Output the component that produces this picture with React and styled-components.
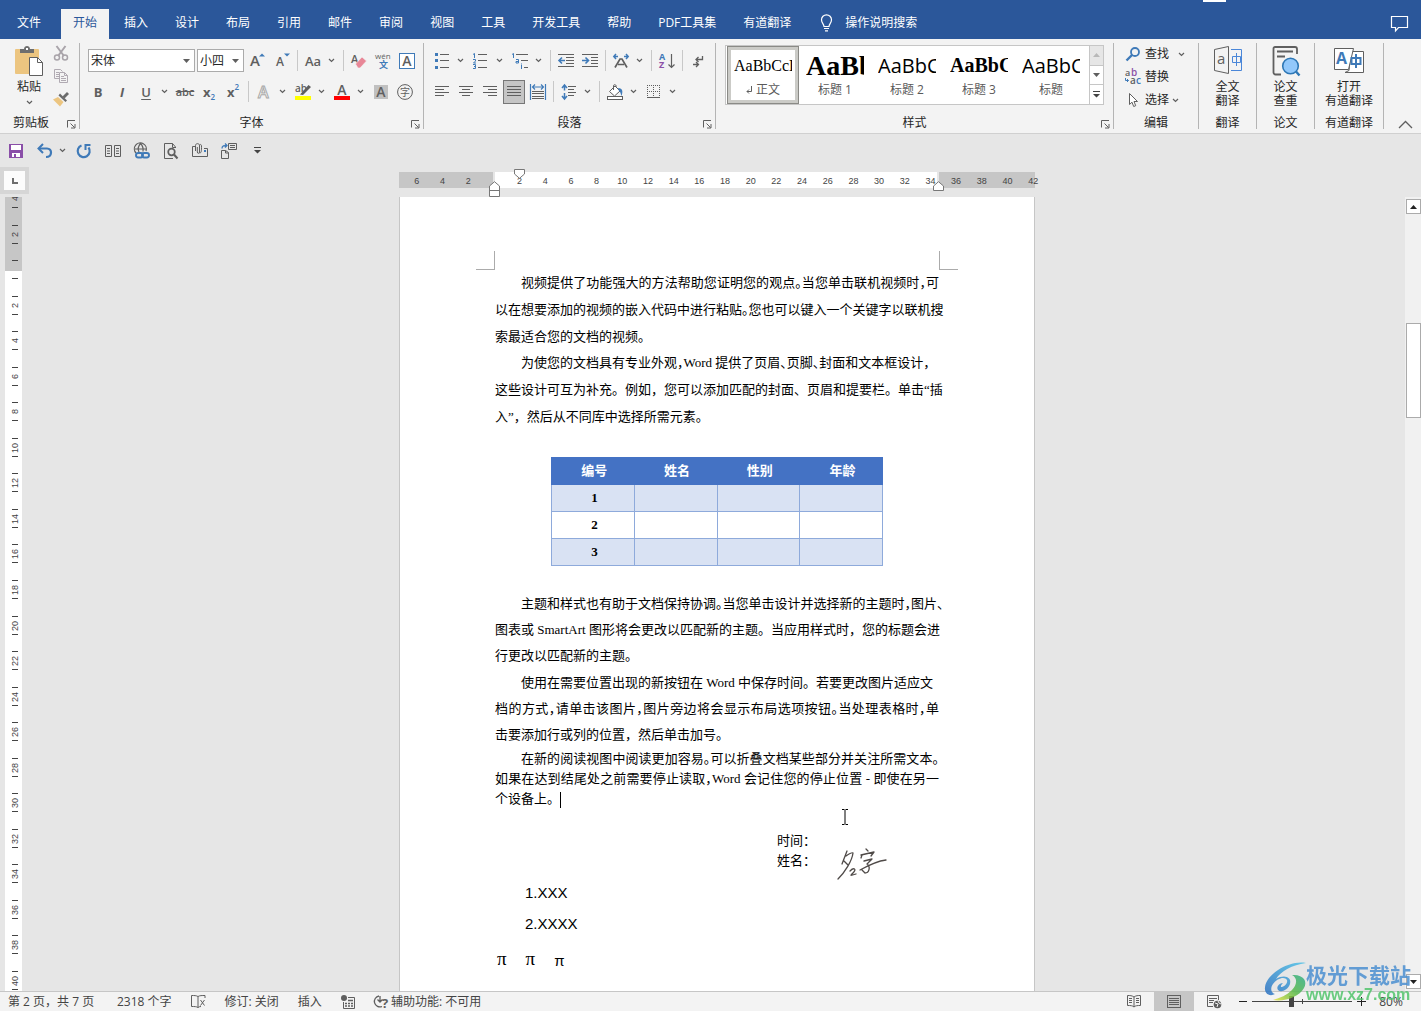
import React from "react";
import styled, { createGlobalStyle, css } from "styled-components";

const INK = "#5f5f5f";
const BLUE = "#3f7ab8";
const UI = '"Open Sans", "Noto Sans CJK SC", sans-serif';

const Global = createGlobalStyle`
  *, *::before, *::after { box-sizing: border-box; }
  body { margin: 0; background: #e6e6e6; font: 12px/16px ${UI}; color: #262626; }
  button, select, input { font: inherit; color: inherit; margin: 0; }
  button { border: 0; padding: 0; background: none; }
  svg { display: block; flex: none; overflow: visible; }
`;

/* ---------- shell ---------- */
const Shell = styled.div`
  height: 100vh;
  display: flex;
  flex-direction: column;
  overflow: hidden;
`;

const TabBar = styled.nav`
  position: relative;
  height: 39px;
  flex: none;
  display: flex;
  align-items: flex-end;
  gap: 3px;
  padding: 0 13px 0 5px;
  background: #2b579a;
`;
const Tab = styled.button`
  height: 30px;
  padding: 0 12px 2px;
  white-space: nowrap;
  color: ${(p) => (p.$active ? "#2b579a" : "#fff")};
  background: ${(p) => (p.$active ? "#f3f3f3" : "transparent")};
  &:first-child { margin-right: 5px; }
`;
const TellMe = styled.button`
  height: 30px;
  display: flex;
  align-items: center;
  gap: 12px;
  padding: 0 12px 2px 14px;
  color: #fff;
`;
const CommentButton = styled.button`
  height: 30px;
  margin-left: auto;
`;
const WindowNub = styled.span`
  position: absolute;
  top: 0;
  right: 195px;
  width: 23px;
  height: 2px;
  background: #fff;
`;

/* ---------- ribbon ---------- */
const Ribbon = styled.div`
  flex: none;
  display: flex;
  height: 95px;
  padding: 4px 0;
  background: #f3f3f3;
  border-bottom: 1px solid #d0d0d0;
`;
const Group = styled.section`
  width: ${(p) => p.$w}px;
  flex: none;
  display: flex;
  flex-direction: column;
  border-right: 1px solid #b4b4b4;
`;
const GroupBody = styled.div`
  flex: 1;
  min-height: 0;
  display: flex;
  flex-direction: ${(p) => (p.$row ? "row" : "column")};
  padding-left: ${(p) => p.$pad || 0}px;
`;
const GroupFoot = styled.div`
  height: 16px;
  display: flex;
  align-items: center;
  justify-content: center;
  position: relative;
  padding-top: 3px;
`;
const Launcher = styled.button`
  position: absolute;
  right: 3px;
  bottom: 0;
`;
const ClipLabel = styled.span`
  padding-right: 17px;
`;
const ToolRow = styled.div`
  height: 31px;
  display: flex;
  align-items: center;
  margin-top: ${(p) => p.$top || 0}px;
`;
const Tool = styled.button`
  width: ${(p) => p.$w || 24}px;
  height: 24px;
  flex: none;
  display: flex;
  align-items: center;
  justify-content: center;
  color: ${INK};
`;
const JustifyButton = styled(Tool)`
  width: 22px;
  margin: 0 1px;
  background: #c5c5c5;
  border: 1px solid #777;
`;
const CaretButton = styled.button`
  width: ${(p) => p.$w || 15}px;
  height: 24px;
  flex: none;
  display: flex;
  align-items: center;
  padding-left: ${(p) => (p.$w ? 0 : 3)}px;
`;
const Divider = styled.span`
  width: 1px;
  height: 21px;
  flex: none;
  margin: 0 3px;
  background: #c8c8c8;
`;
const Glyph = styled.span`
  font: ${(p) => p.$style || "normal"} ${(p) => p.$weight || 700} ${(p) => p.$size || 13}px/16px "Open Sans", sans-serif;
  color: ${INK};
  text-decoration: ${(p) => p.$deco || "none"};
  text-underline-offset: 2px;
`;
const Script = styled.span`
  align-self: ${(p) => (p.$low ? "flex-end" : "flex-start")};
  font: 600 8px/14px "Open Sans", sans-serif;
  color: ${BLUE};
`;
const FontFields = styled.div`
  display: flex;
  padding-left: 2px;
`;
const ComboBox = styled.label`
  position: relative;
  width: ${(p) => p.$w}px;
  height: 23px;
  margin-right: 2px;
  flex: none;
  background: #fff;
  border: 1px solid #ababab;
  select {
    appearance: none;
    width: 100%;
    height: 21px;
    padding: 0 2px;
    border: 0;
    background: transparent;
  }
  svg { position: absolute; right: 4px; top: 9px; pointer-events: none; }
`;
const PasteButton = styled.button`
  width: 46px;
  height: 66px;
  display: flex;
  flex-direction: column;
  align-items: center;
  padding: 3px 0 0 4px;
  svg + span { margin-top: 2px; }
  span + svg { margin-top: 5px; }
`;
const IconStack = styled.div`
  display: flex;
  flex-direction: column;
  padding: 2px 0 0 3px;
  gap: 7px;
`;
const Plain = styled.button`
  display: flex;
`;
const BigButton = styled.button`
  width: 100%;
  height: 68px;
  display: flex;
  flex-direction: column;
  align-items: center;
  padding-top: 3px;
  line-height: 14px;
`;
const BigIcon = styled.span`
  height: 34px;
`;
const EditLine = styled.div`
  height: 23px;
  display: flex;
  align-items: center;
  padding-bottom: 1px;
`;
const EditButton = styled.button`
  display: flex;
  align-items: center;
  gap: 4px;
`;
const IconSlot = styled.span`
  width: 16px;
  display: flex;
  justify-content: center;
`;
const Gap = styled.span`
  width: 6px;
`;
const CollapseSlot = styled.div`
  flex: 1;
  display: flex;
  align-items: flex-end;
  justify-content: flex-end;
  padding-right: 8px;
`;

/* ---------- style gallery ---------- */
const Gallery = styled.div`
  display: flex;
  height: 60px;
  margin: 2px 0 0 9px;
  width: 379px;
  background: #fff;
  border: 1px solid #c6c6c6;
  padding-left: 1px;
`;
const StyleCard = styled.button`
  width: 72px;
  height: 58px;
  flex: none;
  display: flex;
  flex-direction: column;
  align-items: center;
  padding: 5px 0 0;
  color: #595959;
  ${(p) => p.$on && css`
    border: 1px solid #8a8a86;
    box-shadow: inset 0 0 0 3px #cbcbc7;
    padding-top: 4px;
  `}
`;
const Preview = styled.span`
  width: 58px;
  height: 28px;
  overflow: hidden;
  white-space: nowrap;
  text-align: left;
  color: #000;
  font: ${(p) => p.$font};
  line-height: 29px;
`;
const CardName = styled.span`
  display: flex;
  align-items: center;
  gap: 4px;
  margin-top: 3px;
`;
const GalleryScroll = styled.div`
  width: 14px;
  margin-left: auto;
  display: flex;
  flex-direction: column;
  button {
    flex: 1;
    display: flex;
    align-items: center;
    justify-content: center;
    border-left: 1px solid #c6c6c6;
  }
  button + button { border-top: 1px solid #c6c6c6; }
  button:first-child { background: #e6e6e6; }
`;

const QuickBar = styled.div`
  flex: none;
  display: flex;
  align-items: center;
  height: 33px;
  padding-left: 1px;
`;

/* ---------- workspace ---------- */
const Workspace = styled.main`
  flex: 1;
  min-height: 0;
  display: grid;
  grid-template: 30px minmax(0, 1fr) / 29px minmax(0, 1fr) 16px;
`;
const TabCorner = styled.button`
  width: 29px;
  height: 27px;
  display: flex;
  align-items: center;
  justify-content: center;
  background: #fcfcfc;
  border: 4px solid #d6d6d6;
`;
const RulerTrack = styled.div`
  position: relative;
  width: 636px;
  height: 16px;
  margin: 5px auto 0;
  background: linear-gradient(90deg, #c6c6c6 0 94px, #e6e6e6 94px 96px, #fff 96px 538px, #e6e6e6 538px 540px, #c6c6c6 540px);
`;
const RulerNumbers = styled.div`
  display: grid;
  grid-template-columns: repeat(25, 1fr);
  margin: 0 -11px 0 5px;
  font: 9px/18px "Liberation Sans", Arial, sans-serif;
  color: #444;
  text-align: center;
`;
const Marker = styled.svg`
  position: absolute;
  left: ${(p) => p.$x}px;
  top: ${(p) => p.$y}px;
`;
const SideRuler = styled.div`
  width: 17px;
  margin-left: 5px;
  overflow: hidden;
  background: linear-gradient(#c6c6c6 0 74px, #fff 74px);
`;
const SideNumbers = styled.div`
  display: grid;
  grid-template-rows: repeat(23, 1fr);
  height: 817px;
  margin-top: -16px;
`;
const SideCell = styled.div`
  display: flex;
  flex-direction: column;
  align-items: center;
  justify-content: center;
  padding-left: 2px;
  font: 9px/10px "Liberation Sans", Arial, sans-serif;
  color: #444;
  &::before, &::after { content: ""; width: 6px; height: 1px; background: #444; }
  span {
    height: 17px;
    display: flex;
    align-items: center;
    justify-content: center;
    writing-mode: vertical-rl;
    transform: rotate(180deg);
  }
`;
const Canvas = styled.div`
  overflow: hidden;
  min-height: 0;
`;
const ScrollBar = styled.div`
  grid-column: 3;
  display: flex;
  flex-direction: column;
  background: #f1f1f1;
  padding: 2px 0 2px 1px;
`;
const ScrollButton = styled.button`
  height: 15px;
  display: flex;
  align-items: center;
  justify-content: center;
  background: #fff;
  border: 1px solid #ababab;
`;
const ScrollTrack = styled.div`
  flex: 1;
  padding-top: 109px;
`;
const Thumb = styled.div`
  height: 95px;
  background: #fff;
  border: 1px solid #ababab;
`;

/* ---------- page ---------- */
const Page = styled.article`
  position: relative;
  width: 636px;
  min-height: 900px;
  margin: 0 auto;
  padding: 54px 95px 0;
  background: #fff;
  border: solid #c6c6c6;
  border-width: 0 1px;
  color: #000;
  font: 13px/27px "Liberation Serif", "Noto Sans CJK SC", serif;
`;
const CropMarks = styled.div`
  display: flex;
  justify-content: space-between;
  margin: 0 -19px -1px;
  &::before, &::after {
    content: "";
    width: 19px;
    height: 19px;
    border-bottom: 1px solid #ababab;
  }
  &::before { border-right: 1px solid #ababab; }
  &::after { border-left: 1px solid #ababab; }
`;
const Paragraph = styled.p`
  margin: 0 0 ${(p) => p.$after || 0}px;
  line-height: ${(p) => p.$pitch}px;
`;
const Line = styled.span`
  display: block;
  white-space: nowrap;
  padding-left: ${(p) => (p.$indent ? 26 : 0)}px;
  text-align: ${(p) => (p.$fill ? "justify" : "left")};
  text-align-last: ${(p) => (p.$fill ? "justify" : "left")};
  font-feature-settings: ${(p) => (p.$tight ? '"halt"' : "normal")};
`;
const TextCaret = styled.span`
  display: inline-block;
  width: 1px;
  height: 16px;
  vertical-align: middle;
  background: #000;
`;
const DataTable = styled.table`
  width: 332px;
  margin: 28px auto 25px;
  border-collapse: collapse;
  table-layout: fixed;
  font-weight: 700;
  text-align: center;
  line-height: 26px;
  th, td { height: 27px; padding: 0 0 0 3px; border: 1px solid #8eaadb; }
  thead th { background: #4472c4; color: #fff; border-color: #4472c4; }
  tbody tr:nth-child(odd) { background: #d9e2f3; }
`;
const SignBlock = styled.div`
  display: flex;
  gap: 21px;
  margin-top: 22px;
  padding-left: 282px;
  line-height: 20px;
  svg { margin: 16px 0 -10px; }
`;
const SignLabels = styled.div`
  display: flex;
  flex-direction: column;
`;
const Items = styled.ul`
  list-style: none;
  margin: 6px 0 0;
  padding: 0 0 0 30px;
  font: 15px/31px "Liberation Sans", Arial, sans-serif;
`;
const Pis = styled.p`
  display: flex;
  gap: 19px;
  margin: 5px 0 0;
  padding-left: 2px;
  font: 19px/30px "Liberation Serif", "Times New Roman", serif;
  span:last-child { font: 15px/34px "Liberation Sans", Arial, sans-serif; }
`;
const Pointer = styled.svg`
  position: absolute;
  left: 441px;
  top: 612px;
`;

/* ---------- status bar ---------- */
const StatusBar = styled.footer`
  flex: none;
  height: 20px;
  display: flex;
  align-items: center;
  justify-content: space-between;
  background: #f3f3f3;
  border-top: 1px solid #c6c6c6;
  color: #444;
`;
const StatusSide = styled.div`
  display: flex;
  align-items: center;
  gap: ${(p) => p.$gap || 0}px;
  padding: ${(p) => p.$pad};
`;
const StatusButton = styled.button`
  display: flex;
  align-items: center;
  gap: 1px;
  white-space: nowrap;
  &:first-child { min-width: 90px; }
`;
const ViewButton = styled.button`
  width: 40px;
  height: 19px;
  display: flex;
  align-items: center;
  justify-content: center;
  background: ${(p) => (p.$on ? "#c6c6c6" : "transparent")};
`;
const ZoomStep = styled.button`
  width: 18px;
  height: 19px;
  display: flex;
  align-items: center;
  justify-content: center;
`;
const ZoomRange = styled.input`
  appearance: none;
  width: 100px;
  height: 12px;
  background: linear-gradient(#444, #444) 50px 50% / 1px 5px no-repeat, linear-gradient(#444, #444) 0 50% / 100% 1px no-repeat;
  &::-webkit-slider-thumb {
    appearance: none;
    width: 5px;
    height: 11px;
    background: #444;
  }
`;
const ZoomLevel = styled.button`
  margin-left: 6px;
  width: 30px;
`;

const Watermark = styled.div`
  position: fixed;
  right: 10px;
  bottom: 8px;
  display: flex;
  align-items: center;
  opacity: 0.85;
  pointer-events: none;
`;
const WatermarkText = styled.div`
  display: flex;
  flex-direction: column;
  strong { font: 700 21px/26px "Noto Sans CJK SC", sans-serif; color: #4a8fd0; }
  span { font: 700 16px/16px "Liberation Sans", Arial, sans-serif; color: #52c46c; }
`;

/* ---------- drawings ---------- */
const Svg = ({ w = 16, h = 16, children, ...rest }) => (
  <svg width={w} height={h} viewBox={`0 0 ${w} ${h}`} fill="none" stroke={INK} aria-hidden="true" {...rest}>
    {children}
  </svg>
);
const Down = () => (
  <Svg w={7} h={5}><path d="M1 1l2.500 2.500L6 1" strokeWidth="1.200" /></Svg>
);
const Solid = ({ color = INK, up }) => (
  <Svg w={7} h={4} stroke="none"><path fill={color} d={up ? "M0 4h7L3.500 0z" : "M0 0h7L3.500 4z"} /></Svg>
);
const Caret = ({ w }) => (
  <CaretButton aria-label="更多选项" $w={w}><Down /></CaretButton>
);
const LaunchIcon = () => (
  <Svg w={9} h={9}><path d="M.5 7.500V.5H8M3.500 3.500L7.500 7.500M8 4v4H4" /></Svg>
);
const Lines = ({ rows }) => (
  <path shapeRendering="crispEdges" d={rows.map(([x, y, w]) => `M${x} ${y}.5h${w}`).join("")} />
);
const T = ({ x, y, s, c = INK, b = 700, children, ...rest }) => (
  <text x={x} y={y} fontSize={s} fill={c} stroke="none" fontWeight={b} fontFamily={UI} {...rest}>
    {children}
  </text>
);

const I = {
  bulb: (
    <Svg w={13} h={18} stroke="#fff">
      <path d="M4 12.500C4 10 1.500 9 1.500 5.800a5 5 0 0 1 10 0C11.500 9 9 10 9 12.500zM4 14.500h5M5 16.800h3" strokeWidth="1.200" />
    </Svg>
  ),
  comment: <Svg w={17} h={16} stroke="#fff"><path d="M.5.5h16v11h-9L4.500 15v-3.500h-4z" strokeWidth="1.200" /></Svg>,
  paste: (
    <Svg w={28} h={31} stroke="none">
      <rect y="3" width="24" height="25" rx="1" fill="#ecc580" />
      <path d="M5 7V3h4c0-4 6-4 6 0h4v4z" fill="#6e6e6e" /><rect x="11" y="2" width="2" height="2" fill="#fff" />
      <path d="M14.500 11.500h8l5 5v13h-13z" fill="#fff" stroke={INK} /><path d="M22.500 11.500v5h5" stroke={INK} />
    </Svg>
  ),
  cut: (
    <Svg stroke="#a9a4aa">
      <path d="M3.500 1l7.500 10M12.500 1L5 11" strokeWidth="2" /><circle cx="4" cy="12.500" r="2.500" strokeWidth="1.500" /><circle cx="12" cy="12.500" r="2.500" strokeWidth="1.500" />
    </Svg>
  ),
  copy: (
    <Svg stroke="#b0aab2">
      <path d="M1.500 1.500h6l2 2M1.500 1.500v9H6M3 4.500h3M3 6.500h3M3 8.500h3" /><path fill="#f3f3f3" d="M6.500 4.500h5l3 3v7h-8z" /><path d="M11.500 4.500v3h3M8 8.500h3M8 10.500h5M8 12.500h5" />
    </Svg>
  ),
  brush: (
    <Svg stroke="none">
      <path fill="#ecc580" d="M0 8.500l5-2.500 5.500 5L7 15.500z" /><path fill="#6b6b6b" d="M5.500 4.500l7 6.500 1.500-1.500-7-7z" /><path fill="#6b6b6b" d="M9.500 5.500L14 1l2 2-4.500 4.500z" />
    </Svg>
  ),
  grow: <Svg><T x="0" y="13" s="15" b={600}>A</T><path fill={BLUE} stroke="none" d="M9 3.500h6L12 .5z" /></Svg>,
  shrink: <Svg><T x="2" y="13" s="12" b={600}>A</T><path fill={BLUE} stroke="none" d="M10 .5h6l-3 3z" /></Svg>,
  eraser: (
    <Svg><T x="0" y="10" s="11" b={600}>A</T><path fill="#e88797" stroke="#f3f3f3" strokeWidth=".6" d="M4.500 11L11 4l4.500 4L9 15H7z" /></Svg>
  ),
  pinyin: (
    <Svg><T x="0" y="6" s="8" b={400}>wén</T><T x="4" y="15" s="9" c={BLUE}>文</T></Svg>
  ),
  boxA: <Svg><rect x=".5" y=".5" width="15" height="15" fill="#fff" stroke={BLUE} /><T x="8" y="13" s="14" b={600} textAnchor="middle">A</T></Svg>,
  effects: <Svg><text x="2" y="14" fontSize="16" fontWeight="600" fill="#fff" stroke="#a8a8a8" fontFamily={UI}>A</text></Svg>,
  highlight: (
    <Svg><T x="0" y="8" s="10" b={600}>ab</T><path fill={INK} stroke="none" d="M5 10.500L13.500 1 16 3 8 11z" /><rect y="12" width="16" height="4" fill="#ff0" stroke="none" /></Svg>
  ),
  fontColor: <Svg><T x="8" y="11" s="14" b={600} textAnchor="middle">A</T><rect y="12" width="16" height="4" fill="#f00" stroke="none" /></Svg>,
  shadeA: <Svg><rect x="1" y="1" width="14" height="14" fill="#c0c0c0" stroke="none" /><T x="8" y="13" s="14" b={600} textAnchor="middle">A</T></Svg>,
  circleChar: <Svg><circle cx="8" cy="8" r="7.400" /><T x="8" y="12" s="10" b={400} textAnchor="middle">字</T></Svg>,
  bullets: <Svg><g fill={BLUE} stroke="none"><rect x="1" width="3" height="3" /><rect x="1" y="6" width="3" height="3" /><rect x="1" y="13" width="3" height="3" /></g><Lines rows={[[6, 1, 9], [6, 7, 9], [6, 14, 9]]} /></Svg>,
  numbers: <Svg stroke={BLUE}><path d="M1.500 5V.5L0 1.500M0 6.500h2.500v1.500L.5 10H3M0 11.500h2.500v4H0M1 13.500h1.500" /><g stroke={INK}><Lines rows={[[5, 1, 9], [5, 7, 9], [5, 14, 9]]} /></g></Svg>,
  levels: <Svg stroke={BLUE}><path d="M1.500 5V.5L0 1.500M4 6.500h2.500V10H4V8.500h2.500M9.500 12v4M9.500 10.500v1" /><g stroke={INK}><Lines rows={[[4, 1, 12], [9, 7, 7], [12, 14, 4]]} /></g></Svg>,
  outdent: <Svg><Lines rows={[[0, 1, 16], [8, 4, 8], [8, 7, 8], [8, 10, 8], [0, 13, 16]]} /><path stroke={BLUE} strokeWidth="1.600" d="M7 7.500H1.500M4 4.500l-3 3 3 3" /></Svg>,
  indent: <Svg><Lines rows={[[0, 1, 16], [9, 4, 7], [9, 7, 7], [9, 10, 7], [0, 13, 16]]} /><path stroke={BLUE} strokeWidth="1.600" d="M0 7.500h6M3.500 4.500l3 3-3 3" /></Svg>,
  asian: <Svg><path d="M2 14.500L7 6h2l5 8.500M5 11.500h6" strokeWidth="1.700" /><path stroke={BLUE} strokeWidth="1.500" d="M5 3.500H1M3 1L.8 3.500 3 6M11 3.500h4M13 1l2.200 2.500L13 6" /></Svg>,
  sort: <Svg><T x="0" y="7" s="9" c={BLUE}>A</T><T x="0" y="15" s="9" c="#8d52a8">Z</T><path d="M12.500 1v13M9.500 11.500l3 3 3-3" strokeWidth="1.200" /></Svg>,
  marks: <Svg w={12}><path d="M10.500 3v3.500H4M6.500 4L4 6.500 6.500 9M1 11.500h5M4 9l2.500 2.500L4 14" strokeWidth="1.300" /></Svg>,
  left: <Svg><Lines rows={[[1, 2, 14], [1, 5, 9], [1, 8, 14], [1, 11, 9]]} /></Svg>,
  center: <Svg><Lines rows={[[1, 2, 14], [4, 5, 8], [1, 8, 14], [4, 11, 8]]} /></Svg>,
  right: <Svg><Lines rows={[[1, 2, 14], [6, 5, 9], [1, 8, 14], [6, 11, 9]]} /></Svg>,
  justify: <Svg w={14}><Lines rows={[[0, 2, 14], [0, 5, 14], [0, 8, 14], [0, 11, 14]]} /></Svg>,
  distribute: <Svg><path stroke={BLUE} d="M.5 0v16M15.500 0v16M3 3h10M5 .5L2.500 3 5 5.500M11 .5L13.500 3 11 5.500" strokeWidth="1.200" /><Lines rows={[[2, 7, 12], [2, 9, 12], [2, 12, 12], [2, 14, 12]]} /></Svg>,
  spacing: <Svg><path stroke={BLUE} strokeWidth="1.500" d="M3.500 1v5.500M3.500 9v6M1 4l2.500-3L6 4M1 12l2.500 3L6 12" /><Lines rows={[[7, 2, 8], [7, 5, 6], [7, 8, 8], [7, 11, 6]]} /></Svg>,
  bucket: <Svg><path fill="#fff" d="M2.500 7.500L8 2l5 5-5.500 5z" /><path d="M6.500 6V1.500C6.500.5 9 .5 9 1.500V3" /><path fill={BLUE} stroke="none" d="M11 4c5 0 5 4 3.500 8-1-2-.5-4-2.500-5z" /><rect x=".5" y="12.500" width="15" height="3" fill="#fff" /></Svg>,
  borders: <Svg><path strokeDasharray="1 1" shapeRendering="crispEdges" d="M1 1.500h13M1 7.500h13M1.500 1v12M7.500 1v12M13.500 1v12" /><Lines rows={[[1, 13, 13]]} /></Svg>,
  find: <Svg w={14} h={14} stroke={BLUE}><circle cx="9" cy="5" r="4" strokeWidth="1.800" /><path d="M6 8l-5.500 5.500" strokeWidth="2.400" /></Svg>,
  replace: <Svg><T x="0" y="7" s="9" b={600}>a</T><T x="6" y="7" s="10" c="#8d52a8" b={600}>b</T><T x="5" y="15" s="10" b={600}>a</T><T x="11" y="15" s="10" c={BLUE} b={600}>c</T><path stroke={BLUE} d="M.5 9v2.500h3M2 10l1.500 1.500L2 13" /></Svg>,
  select: <Svg w={14}><path fill="#fff" d="M3.500 1.500v11l2.500-2.300 1.700 4.300 2-.8L8 9.500h3.500z" /></Svg>,
  translate: (
    <Svg w={28} h={28}><path d="M.5 3.500l14-3v27l-14-3z" /><T x="3" y="18" s="15" b={400}>a</T><g stroke="#4a86d8"><path d="M17 3.500h10.500v21H17M18.500 10.500h8v6h-8zM22.500 7v13" /></g></Svg>
  ),
  paper: (
    <Svg w={28} h={30}><path d="M9 28.500H3.500a2 2 0 0 1-2-2v-24a1.500 1.500 0 0 1 1.500-1.500h20a2 2 0 0 1 2 2v5" strokeWidth="1.800" /><path d="M5 5.500h16M5 10.500h8" strokeWidth="1.800" /><circle cx="18.500" cy="20" r="7.800" fill="#92c8fb" stroke="#2e77b5" strokeWidth="1.600" /><path d="M24 25.500l3.500 4" stroke="#2e77b5" strokeWidth="2.400" /></Svg>
  ),
  youdao: (
    <Svg w={30} h={28}><path fill="#fff" d="M15 24.500l-4 2h18.500v-21H17z" /><path fill="#fff" d="M.5 2.500h19l-5 21H.5z" /><T x="2" y="18" s="16" c={BLUE}>A</T><path stroke={BLUE} strokeWidth="2" d="M17.500 12h9v6h-9zM22 8v14" /></Svg>
  ),
  up: <Svg w={15} h={9}><path d="M1 8l6.500-6.500L14 8" strokeWidth="1.300" /></Svg>,
  save: <Svg><path fill="#8a4fa8" stroke="none" d="M1 1h14v14H1z" /><path fill="#fff" stroke="none" d="M3 2h10v5H3zM4 10h8v4H4z" /><path fill="#8a4fa8" stroke="none" d="M6 11h2v3H6z" /></Svg>,
  undo: <Svg stroke={BLUE}><path d="M2 5.500h8c5.500 0 5.500 8.500-1 8.500" strokeWidth="2.200" /><path d="M6 1L1.500 5.500 6 10" strokeWidth="2" /></Svg>,
  redo: <Svg stroke={BLUE}><path d="M5.500 2.500A6 6 0 1 0 12.500 4.500" strokeWidth="2.200" /><path d="M14.500 2H9.500V7" strokeWidth="2" /></Svg>,
  columns: <Svg><path d="M.5 2.500h6v11h-6zM9.500 2.500h6v11h-6zM2 5.500h3M2 8h3M2 10.500h3M11 5.500h3M11 8h3M11 10.500h3" /></Svg>,
  globe: <Svg><path d="M2 10A6 6 0 1 1 12 8M1 6h11M6.500.5C3.500 4 4 7 5 9M6.500.5c3 3 3 5 2.500 8" strokeWidth="1.200" /><g stroke={BLUE} strokeWidth="1.900"><rect x="2" y="10" width="7" height="4.500" rx="2.200" /><rect x="8" y="10" width="7" height="4.500" rx="2.200" /></g></Svg>,
  docSearch: <Svg><path d="M12.500 5v-1L9.500.5h-8v15H10M9.500.5v4h3" /><circle cx="8.500" cy="9" r="3.300" strokeWidth="1.700" /><path d="M11 11.500l3.500 4" strokeWidth="2" /></Svg>,
  mail: <Svg><path d="M3 3.500H.5v10h15v-8H12" /><path d="M3.500 8V2.500c0-2.500 4-2.500 4 0V9c0 1.800-2.200 1.800-2.200 0V4M7.500 10c2 0 2-2 2-7 0-2-2-2-2 0" /><path stroke={BLUE} strokeWidth="2" d="M12 8h2" /></Svg>,
  insertDoc: <Svg><path d="M7.500.5h8v6h-8zM9 2.500h5M9 4.500h5M.5 7.500h4l3 2v6h-7zM4.500 7.500v2.500h3" /><path stroke={BLUE} strokeWidth="1.300" d="M1 5.500c0-3 2-3 5-3M4 .5l2 2-2 2" /></Svg>,
  more: <Svg w={7} h={7} stroke="none"><path fill="#444" d="M0 0h7v1H0zM0 3h7L3.500 6.500z" /></Svg>,
  ell: <Svg w={6} h={6} stroke="#6e6e6e"><path d="M1 0v5h5" strokeWidth="2" /></Svg>,
  proof: <Svg w={15} h={13}><path d="M7 12.500V1.500C5.500.5 3 .5.500.5v11c3 0 5 0 6.500 1 1-.8 2-1 3-1M7 1.500c1.500-1 4-1 7-1V3M9.500 5l4 5.500M13.500 5l-4 5.500" /></Svg>,
  macro: <Svg w={14} h={14}><path d="M7 2.500h6.500v11h-11V7" /><circle cx="3" cy="3" r="3" fill={INK} stroke="none" /><path d="M7 5.500h5M4 8.500h2m1 0h2m1 0h2M4 11h2m1 0h2m1 0h2" strokeWidth="1.500" /></Svg>,
  access: <Svg w={16} h={14}><path d="M5 1a5.500 5.500 0 1 0 3 10.500M6 1v6M3.500 4.500L6 7l2.500-2.500" strokeWidth="1.300" /><T x="8" y="13" s="13">?</T></Svg>,
  read: <Svg w={14} h={13}><path d="M7 12V2C5 .5 3 .5.500.5v10c3 0 5 0 6.500 1.500 1.500-1.500 3.500-1.500 6.500-1.500V.5C11 .5 9 .5 7 2M2 3.500h3M2 5.500h3M2 7.500h3M9 3.500h3M9 5.500h3M9 7.500h3" /></Svg>,
  print: <Svg w={14} h={13}><path shapeRendering="crispEdges" d="M.5.5h13v12H.5zM2 3.500h10M2 5.500h10M2 7.500h10M2 9.500h10" /></Svg>,
  web: <Svg w={15} h={14}><path d="M6 11.500H.5V.5h11V5M2 3.500h8M2 5.500h5M2 7.500h4" /><circle cx="10.500" cy="9.500" r="3.800" fill={INK} stroke="none" /><path stroke="#f3f3f3" d="M8 8l3 1-1 3M11 6l1 2 2 1" /></Svg>,
};

/* ---------- data ---------- */
const tabs = ["文件", "开始", "插入", "设计", "布局", "引用", "邮件", "审阅", "视图", "工具", "开发工具", "帮助", "PDF工具集", "有道翻译"];
const SERIF = '"Liberation Serif", "Times New Roman", serif';
const styleCards = [
  { name: "正文", sample: "AaBbCcD", font: `400 16px ${SERIF}`, on: true },
  { name: "标题 1", sample: "AaBb", font: `700 28px ${SERIF}` },
  { name: "标题 2", sample: "AaBbC", font: `400 20px ${UI}` },
  { name: "标题 3", sample: "AaBbC", font: `700 20px ${SERIF}` },
  { name: "标题", sample: "AaBbC", font: `400 20px ${UI}` },
];
const intro = [
  [
    ["视频提供了功能强大的方法帮助您证明您的观点。当您单击联机视频时，可", "itf"],
    ["以在想要添加的视频的嵌入代码中进行粘贴。您也可以键入一个关键字以联机搜", "tf"],
    ["索最适合您的文档的视频。", ""],
  ],
  [
    ["为使您的文档具有专业外观，Word 提供了页眉、页脚、封面和文本框设计，", "it"],
    ["这些设计可互为补充。例如，您可以添加匹配的封面、页眉和提要栏。单击“插", "f"],
    ["入”，然后从不同库中选择所需元素。", ""],
  ],
];
const middle = [
  [
    ["主题和样式也有助于文档保持协调。当您单击设计并选择新的主题时，图片、", "it"],
    ["图表或 SmartArt 图形将会更改以匹配新的主题。当应用样式时，您的标题会进", "f"],
    ["行更改以匹配新的主题。", ""],
  ],
  [
    ["使用在需要位置出现的新按钮在 Word 中保存时间。若要更改图片适应文", "i"],
    ["档的方式，请单击该图片，图片旁边将会显示布局选项按钮。当处理表格时，单", "tf"],
    ["击要添加行或列的位置，然后单击加号。", ""],
  ],
];
const closing = [
  ["在新的阅读视图中阅读更加容易。可以折叠文档某些部分并关注所需文本。", "itf"],
  ["如果在达到结尾处之前需要停止读取，Word 会记住您的停止位置 - 即使在另一", "tf"],
  ["个设备上。", "", true],
];
const rulerMarks = [6, 4, 2, "", ...Array.from({ length: 21 }, (_, i) => (i + 1) * 2)];
const sideMarks = [4, 2, "", ...Array.from({ length: 20 }, (_, i) => (i + 1) * 2)];

const Block = ({ lines, pitch, after }) => (
  <Paragraph $pitch={pitch} $after={after}>
    {lines.map(([text, flags, cursor]) => (
      <Line key={text} $indent={flags.includes("i")} $tight={flags.includes("t")} $fill={flags.includes("f")}>
        {text}
        {cursor && <TextCaret />}
      </Line>
    ))}
  </Paragraph>
);

const Foot = ({ label, launch }) => (
  <GroupFoot>
    {label}
    {launch && <Launcher aria-label={`${label}设置`}><LaunchIcon /></Launcher>}
  </GroupFoot>
);

const B = ({ icon, label, ...rest }) => <Tool aria-label={label} {...rest}>{I[icon]}</Tool>;

const BigGroup = ({ w, icon, lines, label }) => (
  <Group $w={w}>
    <GroupBody>
      <BigButton>
        <BigIcon>{I[icon]}</BigIcon>
        {lines.map((l) => <span key={l}>{l}</span>)}
      </BigButton>
    </GroupBody>
    <Foot label={label} />
  </Group>
);

function RibbonBar() {
  return (
    <Ribbon>
      <Group $w={80}>
        <GroupBody $row $pad={4}>
          <PasteButton>{I.paste}<span>粘贴</span><Down /></PasteButton>
          <IconStack>
            <Plain aria-label="剪切">{I.cut}</Plain>
            <Plain aria-label="复制">{I.copy}</Plain>
            <Plain aria-label="格式刷">{I.brush}</Plain>
          </IconStack>
        </GroupBody>
        <GroupFoot>
          <ClipLabel>剪贴板</ClipLabel>
          <Launcher aria-label="剪贴板设置"><LaunchIcon /></Launcher>
        </GroupFoot>
      </Group>

      <Group $w={344}>
        <GroupBody $pad={6}>
          <ToolRow $top={2}>
            <FontFields>
              <ComboBox $w={107}><select aria-label="字体"><option>宋体</option></select><Solid /></ComboBox>
              <ComboBox $w={47}><select aria-label="字号"><option>小四</option></select><Solid /></ComboBox>
            </FontFields>
            <B icon="grow" label="增大字号" /><B icon="shrink" label="减小字号" /><Divider />
            <Tool><Glyph $weight={600}>Aa</Glyph></Tool><Caret /><Divider />
            <B icon="eraser" label="清除格式" /><B icon="pinyin" label="拼音指南" /><B icon="boxA" label="字符边框" />
          </ToolRow>
          <ToolRow>
            <Tool><Glyph>B</Glyph></Tool><Tool><Glyph $style="italic">I</Glyph></Tool>
            <Tool><Glyph $deco="underline" $weight={600}>U</Glyph></Tool><Caret />
            <Tool><Glyph $deco="line-through" $size={11} $weight={600}>abc</Glyph></Tool>
            <Tool><Glyph>x</Glyph><Script $low>2</Script></Tool>
            <Tool><Glyph>x</Glyph><Script>2</Script></Tool><Divider />
            <B icon="effects" label="文本效果" /><Caret /><B icon="highlight" label="突出显示" /><Caret />
            <B icon="fontColor" label="字体颜色" /><Caret /><B icon="shadeA" label="字符底纹" /><B icon="circleChar" label="带圈字符" />
          </ToolRow>
        </GroupBody>
        <Foot label="字体" launch />
      </Group>

      <Group $w={292}>
        <GroupBody $pad={6}>
          <ToolRow $top={2}>
            <B icon="bullets" label="项目符号" /><Caret /><B icon="numbers" label="编号" /><Caret /><B icon="levels" label="多级列表" /><Caret /><Divider />
            <B icon="outdent" label="减少缩进" /><B icon="indent" label="增加缩进" /><Divider />
            <B icon="asian" label="中文版式" /><Caret /><Divider /><B icon="sort" label="排序" /><Divider /><B icon="marks" label="显示标记" />
          </ToolRow>
          <ToolRow>
            <B icon="left" label="左对齐" /><B icon="center" label="居中" /><B icon="right" label="右对齐" />
            <JustifyButton aria-label="两端对齐">{I.justify}</JustifyButton><B icon="distribute" label="分散对齐" /><Divider />
            <B icon="spacing" label="行距" /><Caret /><Divider /><B icon="bucket" label="底纹" /><Caret /><B icon="borders" label="边框" /><Caret />
          </ToolRow>
        </GroupBody>
        <Foot label="段落" launch />
      </Group>

      <Group $w={398}>
        <GroupBody>
          <Gallery>
            {styleCards.map((s) => (
              <StyleCard key={s.name} $on={s.on}>
                <Preview $font={s.font}>{s.sample}</Preview>
                <CardName>
                  {s.on && <Svg w={6} h={8}><path d="M5.500 0v5.500H1M3 3.500l-2 2 2 2" /></Svg>}
                  {s.name}
                </CardName>
              </StyleCard>
            ))}
            <GalleryScroll>
              <button aria-label="上一行"><Solid up color="#b8b8b8" /></button>
              <button aria-label="下一行"><Solid /></button>
              <button aria-label="更多样式">{I.more}</button>
            </GalleryScroll>
          </Gallery>
        </GroupBody>
        <Foot label="样式" launch />
      </Group>

      <Group $w={85}>
        <GroupBody $pad={11}>
          <EditLine><EditButton><IconSlot>{I.find}</IconSlot>查找</EditButton><Gap /><Caret /></EditLine>
          <EditLine><EditButton><IconSlot>{I.replace}</IconSlot>替换</EditButton></EditLine>
          <EditLine><EditButton><IconSlot>{I.select}</IconSlot>选择</EditButton><Caret /></EditLine>
        </GroupBody>
        <Foot label="编辑" />
      </Group>

      <BigGroup w={58} icon="translate" lines={["全文", "翻译"]} label="翻译" />
      <BigGroup w={58} icon="paper" lines={["论文", "查重"]} label="论文" />
      <BigGroup w={69} icon="youdao" lines={["打开", "有道翻译"]} label="有道翻译" />
      <CollapseSlot><Plain aria-label="折叠功能区">{I.up}</Plain></CollapseSlot>
    </Ribbon>
  );
}

export default function App() {
  return (
    <Shell lang="zh-CN">
      <Global />
      <TabBar>
        {tabs.map((t) => <Tab key={t} $active={t === "开始"}>{t}</Tab>)}
        <TellMe>{I.bulb}操作说明搜索</TellMe>
        <CommentButton aria-label="批注">{I.comment}</CommentButton>
        <WindowNub />
      </TabBar>
      <RibbonBar />
      <QuickBar>
        <B icon="save" label="保存" $w={29} /><B icon="undo" label="撤消" $w={29} /><Caret w={10} />
        <B icon="redo" label="重复" $w={29} /><B icon="columns" label="并排查看" $w={29} /><B icon="globe" label="超链接" $w={29} />
        <B icon="docSearch" label="打印预览" $w={29} /><B icon="mail" label="电子邮件" $w={29} />
        <B icon="insertDoc" label="插入文件" $w={29} /><B icon="more" label="自定义" $w={29} />
      </QuickBar>

      <Workspace>
        <TabCorner aria-label="制表符">{I.ell}</TabCorner>
        <div>
          <RulerTrack>
            <RulerNumbers>{rulerMarks.map((n, i) => <span key={i}>{n}</span>)}</RulerNumbers>
            <Marker $x={115} $y={-3} width="11" height="10" viewBox="0 0 11 10" fill="#fff" stroke="#777"><path d="M.5.5h10v4.500L5.500 9.300.5 5z" /></Marker>
            <Marker $x={90} $y={9} width="11" height="16" viewBox="0 0 11 16" fill="#fff" stroke="#777"><path d="M.5 15.500V5L5.500.7l5 4.300v10.500zM.5 9.500h10" /></Marker>
            <Marker $x={534} $y={9} width="11" height="10" viewBox="0 0 11 10" fill="#fff" stroke="#777"><path d="M.5 9.500V5L5.500.7l5 4.300v4.500z" /></Marker>
          </RulerTrack>
        </div>
        <span />
        <SideRuler>
          <SideNumbers>{sideMarks.map((n, i) => <SideCell key={i}><span>{n}</span></SideCell>)}</SideNumbers>
        </SideRuler>
        <Canvas>
          <Page>
            <CropMarks />
            {intro.map((p, i) => <Block key={i} lines={p} pitch={27} after={-1} />)}
            <DataTable>
              <thead><tr>{["编号", "姓名", "性别", "年龄"].map((h) => <th key={h} scope="col">{h}</th>)}</tr></thead>
              <tbody>{[1, 2, 3].map((n) => <tr key={n}><td>{n}</td><td /><td /><td /></tr>)}</tbody>
            </DataTable>
            {middle.map((p, i) => <Block key={i} lines={p} pitch={26} after={1} />)}
            <Block lines={closing} pitch={20} />
            <SignBlock>
              <SignLabels><span>时间：</span><span>姓名：</span></SignLabels>
              <Svg w={50} h={34} stroke="#4f4a48" strokeWidth="1.300" strokeLinecap="round" strokeLinejoin="round">
                <path d="M10 4L5 17M9 9c3-2 6-4 7-3C15 14 8 25 1 32M7 14l4 4M13 24c4-4 7-2 3 2-3 3-3 3 3 1" />
                <path d="M29 2l2 2M24 11l1-3M24 8l13-3-3 4M27 14l8-2-5 5c4 3 2 9-2 9l-3-3M23 23c9-5 18-9 26-10" />
              </Svg>
            </SignBlock>
            <Items><li>1.XXX</li><li>2.XXXX</li></Items>
            <Pis><span>π</span><span>π</span><span>π</span></Pis>
            <Pointer width="8" height="16" viewBox="0 0 8 16" fill="none" stroke="#000" aria-hidden="true">
              <path d="M1 .5h2.500M4.500.5H7M4 1v14M1 15.500h2.500M4.500 15.500H7" />
            </Pointer>
          </Page>
        </Canvas>
        <ScrollBar>
          <ScrollButton aria-label="向上滚动"><Solid up color="#222" /></ScrollButton>
          <ScrollTrack><Thumb /></ScrollTrack>
          <ScrollButton aria-label="向下滚动"><Solid color="#222" /></ScrollButton>
        </ScrollBar>
      </Workspace>

      <StatusBar>
        <StatusSide $gap={19} $pad="0 0 0 8px">
          <StatusButton>第 2 页，共 7 页</StatusButton>
          <StatusButton>2318 个字</StatusButton>
          <StatusButton aria-label="校对">{I.proof}</StatusButton>
          <StatusButton>修订: 关闭</StatusButton>
          <StatusButton>插入</StatusButton>
          <StatusButton aria-label="宏">{I.macro}</StatusButton>
          <StatusButton>{I.access}辅助功能: 不可用</StatusButton>
        </StatusSide>
        <StatusSide $pad="0 15px 0 0">
          <ViewButton aria-label="阅读视图">{I.read}</ViewButton>
          <ViewButton aria-label="页面视图" $on>{I.print}</ViewButton>
          <ViewButton aria-label="Web 版式视图">{I.web}</ViewButton>
          <ZoomStep aria-label="缩小"><Svg w={9} h={9}><path d="M0 4.500h8" stroke="#222" /></Svg></ZoomStep>
          <ZoomRange type="range" aria-label="缩放" min="0" max="100" defaultValue="39" />
          <ZoomStep aria-label="放大"><Svg w={9} h={9}><path d="M0 4.500h9M4.500 0v9" stroke="#222" /></Svg></ZoomStep>
          <ZoomLevel>80%</ZoomLevel>
        </StatusSide>
      </StatusBar>

      <Watermark>
        <svg width="42" height="40" viewBox="0 0 42 40" aria-hidden="true">
          <defs>
            <linearGradient id="sky" x1="0" y1="1" x2="1" y2="0"><stop offset="0" stopColor="#2b6fc0" /><stop offset="1" stopColor="#4fc3e8" /></linearGradient>
            <linearGradient id="leaf" x1="0" y1="1" x2="1" y2="0"><stop offset="0" stopColor="#e8e23c" /><stop offset=".5" stopColor="#58b848" /><stop offset="1" stopColor="#2fae8a" /></linearGradient>
          </defs>
          <path fill="url(#sky)" d="M42 1C25-2 3 12 1 25c-1 7 5 10 10 7-4-1-5-6-2-10 4-6 12-8 14-4 1 3-2 6-5 7-2 0-1-2 1-4-4 0-7 4-5 7 3 3 10 0 12-6 2-7-6-10-14-5C17 9 28 3 42 1z" />
          <path fill="url(#leaf)" d="M28 13c6 3 5 10 0 15-5 5-12 8-19 10 12 2 26-3 31-12 4-7-1-14-12-13z" />
        </svg>
        <WatermarkText><strong>极光下载站</strong><span>www.xz7.com</span></WatermarkText>
      </Watermark>
    </Shell>
  );
}
